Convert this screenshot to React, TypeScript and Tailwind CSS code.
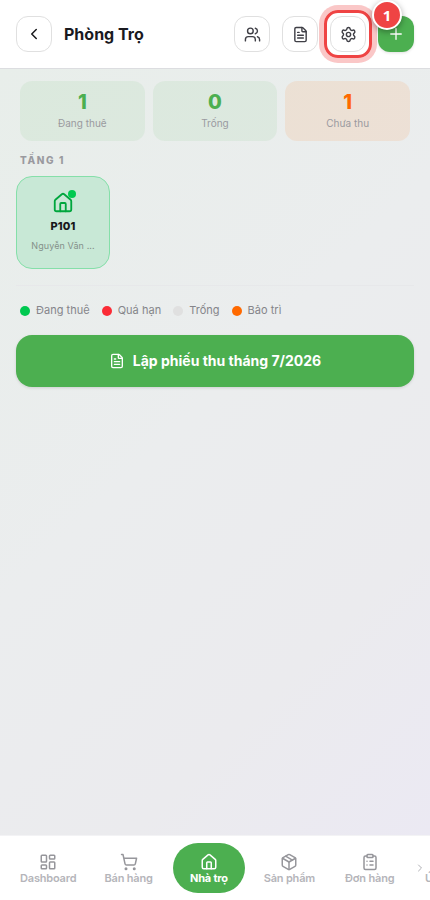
import React from "react";
import {
  ChevronLeft,
  ChevronRight,
  ClipboardList,
  FileText,
  House,
  LayoutDashboard,
  LayoutGrid,
  Package,
  Plus,
  Settings,
  ShoppingCart,
  Users,
} from "lucide-react";

const stats = [
  { value: "1", label: "Đang thuê", box: "bg-[#4caf50]/8", text: "text-[#4caf50]" },
  { value: "0", label: "Trống", box: "bg-[#4caf50]/8", text: "text-[#4caf50]" },
  { value: "1", label: "Chưa thu", box: "bg-[#ff6900]/10", text: "text-[#ff6900]" },
];

const legend = [
  { label: "Đang thuê", dot: "bg-[#00c950]" },
  { label: "Quá hạn", dot: "bg-[#fb2c36]" },
  { label: "Trống", dot: "bg-[#e0e0e0]" },
  { label: "Bảo trì", dot: "bg-[#ff6900]" },
];

const tabs = [
  { label: "Dashboard", icon: LayoutDashboard },
  { label: "Bán hàng", icon: ShoppingCart },
  { label: "Nhà trọ", icon: House, active: true },
  { label: "Sản phẩm", icon: Package },
  { label: "Đơn hàng", icon: ClipboardList },
  { label: "Ứng dụng", icon: LayoutGrid },
];

const iconButton =
  "flex size-9 shrink-0 items-center justify-center rounded-xl border border-[#e0e0e0] bg-white text-[#3f3f46]";

function Header() {
  return (
    <header className="flex h-[69px] shrink-0 items-center border-b border-[#dcdde0] bg-white px-4">
      <button className={iconButton}>
        <ChevronLeft size={18} className="text-[#18181b]" />
      </button>
      <h1 className="ml-3 flex-1 text-base font-bold text-[#1a1a1f]">Phòng Trọ</h1>
      <div className="flex gap-3">
        <button className={iconButton}>
          <Users size={17} />
        </button>
        <button className={iconButton}>
          <FileText size={17} />
        </button>
        <div className="relative z-10">
          <button className={iconButton}>
            <Settings size={17} />
          </button>
          <div className="absolute -inset-1.5 rounded-[14px] border-3 border-[#ef4444] shadow-[0_0_0_5px_rgba(239,68,68,0.3)]" />
          <div className="absolute -top-4 left-[42px] flex size-[30px] items-center justify-center rounded-full border-2 border-white bg-[#ef4444] font-['Noto_Sans',sans-serif] text-[15px] font-bold text-white shadow-[0_2px_6px_rgba(0,0,0,0.35)]">
            1
          </div>
        </div>
        <button className="flex size-9 items-center justify-center rounded-xl bg-[#4caf50] text-white shadow-[0_1px_3px_rgba(0,0,0,0.12)]">
          <Plus size={18} strokeWidth={1.75} />
        </button>
      </div>
    </header>
  );
}

export default function App() {
  return (
    <div className="flex h-[900px] w-full flex-col overflow-hidden bg-white font-['Inter',sans-serif]">
      <Header />
      <main className="min-h-0 flex-1 bg-[linear-gradient(135deg,#e8eeea_0%,#ebedee_45%,#ebebee_75%,#ebe9f3_100%)] px-4 pt-3">
        <section className="grid grid-cols-3 gap-2 px-1">
          {stats.map((s) => (
            <div key={s.label} className={`flex h-[60px] flex-col items-center rounded-xl pt-[7px] ${s.box}`}>
              <span className={`text-xl leading-7 font-extrabold ${s.text}`}>{s.value}</span>
              <span className="text-[10px] leading-[15px] text-[#9a9a9f]">{s.label}</span>
            </div>
          ))}
        </section>

        <h2 className="mt-3 px-1 text-[10px] leading-[15px] font-extrabold tracking-[1.6px] text-[#9a9a9f]">
          TẦNG 1
        </h2>

        <div className="mt-2 flex h-[93px] w-[94px] flex-col items-center rounded-2xl border border-[#85dfa9] bg-[#c8e8d6] pt-[15px]">
          <div className="relative">
            <House size={22} className="text-[#00a63e]" />
            <span className="absolute -top-0.5 -right-0.5 size-2 rounded-full bg-[#00c950]" />
          </div>
          <span className="mt-1 text-[11px] leading-4 font-extrabold tracking-[0.1px] text-[#18181b]">P101</span>
          <span className="mt-[5px] text-[9px] leading-[14px] tracking-[0.1px] text-[#84918a]">Nguyễn Văn ...</span>
        </div>

        <div className="mt-4 flex gap-3 border-t border-[#e7e8ea] px-1 pt-4">
          {legend.map((l) => (
            <div
              key={l.label}
              className="flex items-center gap-1.5 text-[11px] leading-[17px] tracking-[0.02px] text-[#85858a]"
            >
              <span className={`size-2.5 rounded-full ${l.dot}`} />
              {l.label}
            </div>
          ))}
        </div>

        <button className="mt-4 flex h-[52px] w-full items-center justify-center gap-2 rounded-2xl bg-[#4caf50] text-sm font-bold text-white shadow-[0_1px_3px_rgba(0,0,0,0.12)]">
          <FileText size={16} />
          Lập phiếu thu tháng 7/2026
        </button>
      </main>

      <nav className="relative flex h-[65px] shrink-0 items-start overflow-hidden border-t border-[#f3f3f5] bg-white pt-[7px] pl-2">
        {tabs.map((t) => (
          <div key={t.label} className="flex w-[80.4px] shrink-0 justify-center">
            <div
              className={`flex h-[50px] w-[72px] flex-col items-center rounded-full pt-2.5 text-[11px] leading-[15px] tracking-[-0.18px] whitespace-nowrap ${
                t.active ? "bg-[#4caf50] font-bold text-white" : "font-semibold text-[#b5b5ba]"
              }`}
            >
              <t.icon size={18} className={t.active ? "text-white" : "text-[#96969b]"} />
              <span>{t.label}</span>
            </div>
          </div>
        ))}
        <ChevronRight size={12} className="absolute top-[26px] right-1 text-[#b0b0b5]" />
      </nav>
    </div>
  );
}
